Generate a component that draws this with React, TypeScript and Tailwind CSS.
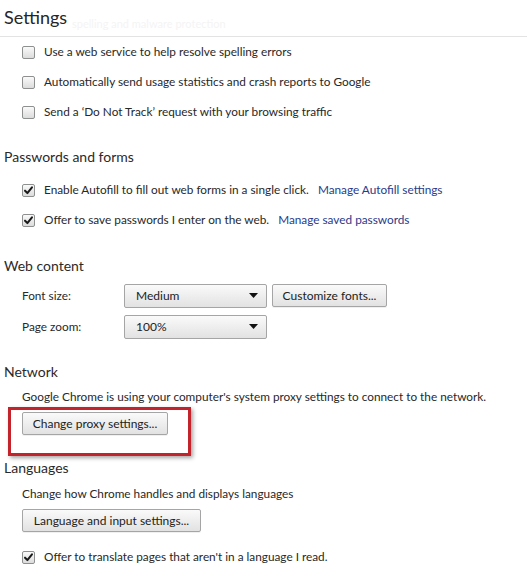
import type { ReactNode } from 'react'

const font = { fontFamily: 'Lato, "Open Sans", Arial, sans-serif' }

function CheckBox({ checked }: { checked?: boolean }) {
  return (
    <span className="relative inline-flex h-[13px] w-[13px] shrink-0 items-center justify-center rounded-[2px] border border-[#8e8f8f] bg-gradient-to-b from-[#fafafa] to-[#dcdcdc]">
      {checked && (
        <svg viewBox="0 0 12 12" className="h-[11px] w-[11px]">
          <path d="M2.2 6.2 L4.8 8.8 L9.8 2.6" fill="none" stroke="#1a1a1a" strokeWidth="2.2" strokeLinecap="round" strokeLinejoin="round" />
        </svg>
      )}
    </span>
  )
}

function CheckRow({ checked, children }: { checked?: boolean; children: ReactNode }) {
  return (
    <div className="flex h-[30px] items-center gap-[9px] pl-[22px]">
      <CheckBox checked={checked} />
      <span className="whitespace-nowrap">{children}</span>
    </div>
  )
}

function Heading({ children, className }: { children: ReactNode; className?: string }) {
  return (
    <div className={'flex h-[30px] items-center pl-[4px] text-[14px] text-[#2a2a2a] ' + (className ?? '')}>
      {children}
    </div>
  )
}

function Button({ children, className }: { children: ReactNode; className?: string }) {
  return (
    <button className={'flex h-[23px] items-center whitespace-nowrap rounded-[2px] border border-[#a5a5a5] bg-gradient-to-b from-[#fafafa] to-[#e2e2e2] px-[10px] text-[12px] text-[#222] shadow-[0_1px_0_rgba(0,0,0,0.06)] ' + (className ?? '')}>
      {children}
    </button>
  )
}

function Select({ value }: { value: string }) {
  return (
    <div className="flex h-[24px] w-[143px] items-center justify-between rounded-[2px] border border-[#a5a5a5] bg-gradient-to-b from-[#fafafa] to-[#e2e2e2] pl-[11px] pr-[8px] text-[12px] text-[#222]">
      <span>{value}</span>
      <svg viewBox="0 0 9 5" className="h-[5px] w-[9px]">
        <path d="M0 0 H9 L4.5 5 Z" fill="#111" />
      </svg>
    </div>
  )
}

export default function App() {
  return (
    <div className="relative h-[567px] w-[527px] overflow-hidden bg-white text-[11.8px] text-[#282828]" style={font}>
      <div className="relative h-[37px] border-b border-[#e3e3e3]">
        <div className="pl-[4px] pt-[4px] text-[18px] text-[#262626]">Settings</div>
        <div className="absolute left-[72px] top-[16px] text-[11px] text-[#f4f4f4]">spelling and malware protection</div>
      </div>

      <CheckRow>Use a web service to help resolve spelling errors</CheckRow>
      <CheckRow>Automatically send usage statistics and crash reports to Google</CheckRow>
      <CheckRow>Send a ‘Do Not Track’ request with your browsing traffic</CheckRow>

      <Heading className="mt-[14px]">Passwords and forms</Heading>
      <div className="mt-[4px]">
        <CheckRow checked>
          Enable Autofill to fill out web forms in a single click.{' '}
          <span className="ml-[6px] text-[#283b8c]">Manage Autofill settings</span>
        </CheckRow>
        <CheckRow checked>
          Offer to save passwords I enter on the web.{' '}
          <span className="ml-[6px] text-[#283b8c]">Manage saved passwords</span>
        </CheckRow>
      </div>

      <Heading className="mt-[15px]">Web content</Heading>
      <div className="flex h-[31px] items-center pl-[22px]">
        <span className="w-[102px]">Font size:</span>
        <Select value="Medium" />
        <Button className="ml-[5px] w-[115px] justify-center px-0">Customize fonts...</Button>
      </div>
      <div className="flex h-[31px] items-center pl-[22px]">
        <span className="w-[102px]">Page zoom:</span>
        <Select value="100%" />
      </div>

      <Heading className="mt-[14px]">Network</Heading>
      <div className="flex h-[22px] items-center whitespace-nowrap pl-[22px]">
        Google Chrome is using your computer's system proxy settings to connect to the network.
      </div>
      <div className="mt-[4px] pl-[22px]">
        <Button className="w-[146px] justify-center px-0">Change proxy settings...</Button>
      </div>

      <Heading className="mt-[17px]">Languages</Heading>
      <div className="flex h-[24px] items-center pl-[22px]">Change how Chrome handles and displays languages</div>
      <div className="mt-[3px] pl-[22px]">
        <Button className="w-[179px] justify-center px-0">Language and input settings...</Button>
      </div>
      <div className="mt-[10px]">
        <CheckRow checked>Offer to translate pages that aren't in a language I read.</CheckRow>
      </div>

      <div className="absolute left-[8px] top-[407px] h-[49px] w-[183px] border-[3px] border-[#c3232b] shadow-[2px_2px_4px_rgba(0,0,0,0.35)]" />
    </div>
  )
}
